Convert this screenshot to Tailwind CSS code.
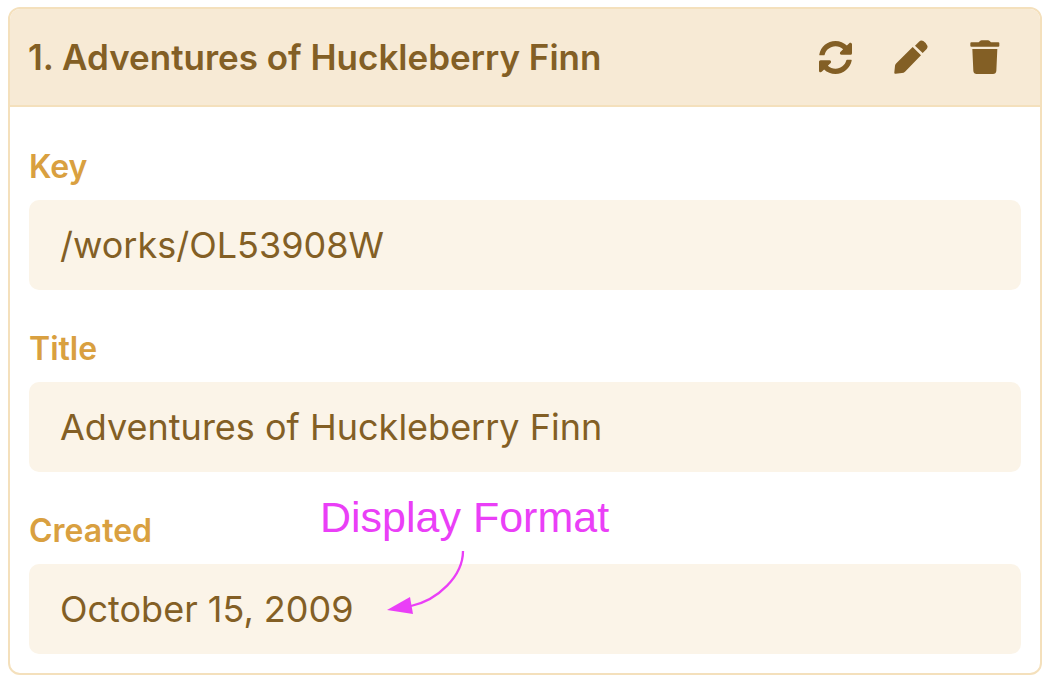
<!DOCTYPE html>
<html lang="en">
<head>
<meta charset="utf-8">
<meta name="viewport" content="width=device-width, initial-scale=1">
<title>Adventures of Huckleberry Finn</title>
<script src="https://cdn.jsdelivr.net/npm/@tailwindcss/browser@4"></script>
</head>
<body class="bg-white px-2 pt-[7px] pb-[5px] font-['Inter',sans-serif] text-[#835f25]">
<article class="overflow-hidden rounded-xl border-2 border-[#f4e0bc]">
  <header class="flex items-center justify-between border-b-2 border-[#f4e0bc] bg-[#f7ead5] pt-[23px] pr-[40px] pb-[23px] pl-[18px]">
    <h1 class="text-[35px] leading-[50px] font-semibold whitespace-nowrap">1. Adventures of Huckleberry Finn</h1>
    <div class="flex items-center gap-[42px]">
      <button type="button" aria-label="Refresh">
        <svg class="size-[33px]" viewBox="8 8 496 496" fill="currentColor" aria-hidden="true"><path d="M370.72 133.28C339.458 104.008 298.888 87.962 255.848 88c-77.458.068-144.328 53.178-162.791 126.85-1.344 5.363-6.122 9.15-11.651 9.15H24.103c-7.498 0-13.194-6.807-11.807-14.176C33.933 94.924 134.813 8 256 8c66.448 0 126.791 26.136 171.315 68.685L463.03 40.97C478.149 25.851 504 36.559 504 57.941V192c0 13.255-10.745 24-24 24H345.941c-21.382 0-32.09-25.851-16.971-40.971zM32 296h134.059c21.382 0 32.09 25.851 16.971 40.971l-41.75 41.75c31.262 29.273 71.835 45.319 114.876 45.28 77.418-.07 144.315-53.144 162.787-126.849 1.344-5.363 6.122-9.15 11.651-9.15h57.304c7.498 0 13.194 6.807 11.807 14.176C478.067 417.076 377.187 504 256 504c-66.448 0-126.791-26.136-171.315-68.685L48.97 471.03C33.851 486.149 8 475.441 8 454.059V320c0-13.255 10.745-24 24-24z"/></svg>
      </button>
      <button type="button" aria-label="Edit">
        <svg class="size-[34px]" viewBox="0 0 102 102" fill="currentColor" aria-hidden="true"><path d="M63 17 75 5Q81-1 88 3Q96 8 100 17Q102 22 98 27L86 39ZM56 21 81 46 33 95Q29 99 24 99L5 101Q0 102 1 97L3 77Q4 73 7 70Z"/></svg>
      </button>
      <button type="button" aria-label="Delete">
        <svg class="h-[34px] w-[30px]" viewBox="0 0 90 102" fill="currentColor" aria-hidden="true"><path d="M4 7H26L30 3Q32 1 35 1H54Q57 1 59 3L63 7H85Q88 7 88 10V17Q88 20 85 20H4Q1 20 1 17V10Q1 7 4 7ZM7 27H82L79 93Q78 102 69 102H20Q11 102 10 93Z"/></svg>
      </button>
    </div>
  </header>
  <div class="flex flex-col gap-[34px] px-[19px] pt-[35px] pb-[19px]">
    <div class="flex flex-col gap-2">
      <label for="key" class="self-start text-[32px] leading-[50px] font-semibold text-[#d9a040]">Key</label>
      <input id="key" readonly value="/works/OL53908W" class="h-[90px] w-full rounded-[10px] bg-[#fbf4e8] px-[31px] text-[36px] outline-none">
    </div>
    <div class="flex flex-col gap-2">
      <label for="title" class="self-start text-[32px] leading-[50px] font-semibold text-[#d9a040]">Title</label>
      <input id="title" readonly value="Adventures of Huckleberry Finn" class="h-[90px] w-full rounded-[10px] bg-[#fbf4e8] px-[31px] text-[36px] outline-none">
    </div>
    <div class="relative flex flex-col gap-2">
      <label for="created" class="self-start text-[32px] leading-[50px] font-semibold text-[#d9a040]">Created</label>
      <input id="created" readonly value="October 15, 2009" class="h-[90px] w-full rounded-[10px] bg-[#fbf4e8] px-[31px] text-[36px] outline-none">
      <p class="absolute -top-[13px] left-[291px] font-['Liberation_Sans',sans-serif] text-[43px] leading-[48px] whitespace-nowrap text-[#ea3ff7]">Display Format</p>
      <svg class="pointer-events-none absolute top-[45px] left-[358px] h-[68px] w-[80px]" viewBox="0 0 80 68" aria-hidden="true"><path d="M76 0C76 25 51 49 24 55" fill="none" stroke="#ea3ff7" stroke-width="2.3"/><path d="M0 59 23 46 26 63Z" fill="#ea3ff7"/></svg>
    </div>
  </div>
</article>
</body>
</html>
